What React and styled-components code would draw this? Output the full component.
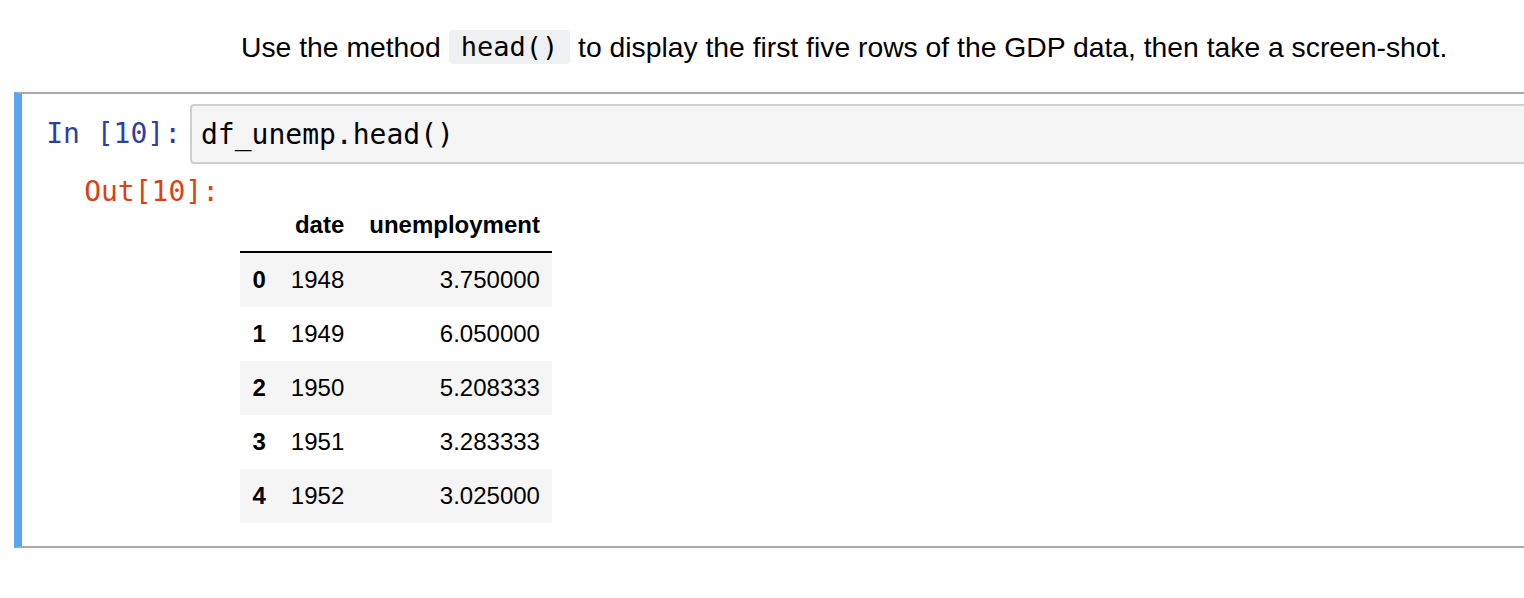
import React from "react";
import styled, { createGlobalStyle } from "styled-components";

const GlobalStyle = createGlobalStyle`
  html, body { margin: 0; padding: 0; background: #fff; overflow: hidden; }
  body { font-family: "Liberation Sans", Arial, sans-serif; color: #000; }
`;

const mono = `"DejaVu Sans Mono", "Liberation Mono", monospace`;

const Page = styled.div` width: 1524px; height: 598px; overflow: hidden; `;
const Markdown = styled.div`
  padding: 30px 0 0 241px; height: 92px; box-sizing: border-box;
  font-size: 28.3px; line-height: 34px; white-space: nowrap;
`;
const Code = styled.code`
  display: inline-block; height: 34px; padding: 0 12px; border-radius: 4px;
  background: #eff0f1; font-family: ${mono}; font-size: 27px; line-height: 34px; vertical-align: top;
`;
const Cell = styled.div`
  margin: 0 -20px 0 14px; border-top: 2px solid #ababab; border-bottom: 2px solid #ababab;
  border-left: 8px solid #59a6ef; padding: 10px 0 23px;
`;
const Row = styled.div` display: flex; align-items: ${({ top }) => (top ? "flex-start" : "center")}; `;
const Prompt = styled.div`
  flex: none; width: ${({ w }) => w}px; box-sizing: border-box; padding-right: 9px; text-align: right;
  font-family: ${mono}; font-size: 28px; line-height: 36px; color: ${({ color }) => color};
`;
const InputBox = styled.div`
  flex: 1; height: 60px; box-sizing: border-box; border: 2px solid #cfcfcf; border-radius: 4px 0 0 4px;
  background: #f5f5f5; padding-left: 9px; display: flex; align-items: center;
  font-family: ${mono}; font-size: 28px; color: #000;
`;
const Output = styled(Row)` margin-top: 10px; `;
const Table = styled.table`
  margin: 25px 0 0 12px; border-collapse: collapse; font-size: 24px;
`;
const Th = styled.th`
  padding: 11px 12.5px; line-height: 30px; text-align: right; font-weight: bold;
  border-bottom: 2px solid #000;
`;
const Tr = styled.tr` background: ${({ striped }) => (striped ? "#f5f5f5" : "#fff")}; `;
const Td = styled.td`
  padding: 12px 12.5px; line-height: 30px; text-align: right; font-weight: ${({ bold }) => (bold ? "bold" : "normal")};
`;

const rows = [
  ["1948", "3.750000"],
  ["1949", "6.050000"],
  ["1950", "5.208333"],
  ["1951", "3.283333"],
  ["1952", "3.025000"],
];

export default function App() {
  return (
    <Page>
      <GlobalStyle />
      <Markdown>
        Use the method <Code>head()</Code> to display the first five rows of the GDP data, then take a screen-shot.
      </Markdown>
      <Cell>
        <Row>
          <Prompt w={168} color="#303f9f">In&nbsp;[10]:</Prompt>
          <InputBox>df_unemp.head()</InputBox>
        </Row>
        <Output top>
          <Prompt w={206} color="#d84315">Out[10]:</Prompt>
          <Table>
            <thead>
              <tr><Th></Th><Th>date</Th><Th>unemployment</Th></tr>
            </thead>
            <tbody>
              {rows.map(([date, value], i) => (
                <Tr key={i} striped={i % 2 === 0}>
                  <Td bold>{i}</Td>
                  <Td>{date}</Td>
                  <Td>{value}</Td>
                </Tr>
              ))}
            </tbody>
          </Table>
        </Output>
      </Cell>
    </Page>
  );
}
